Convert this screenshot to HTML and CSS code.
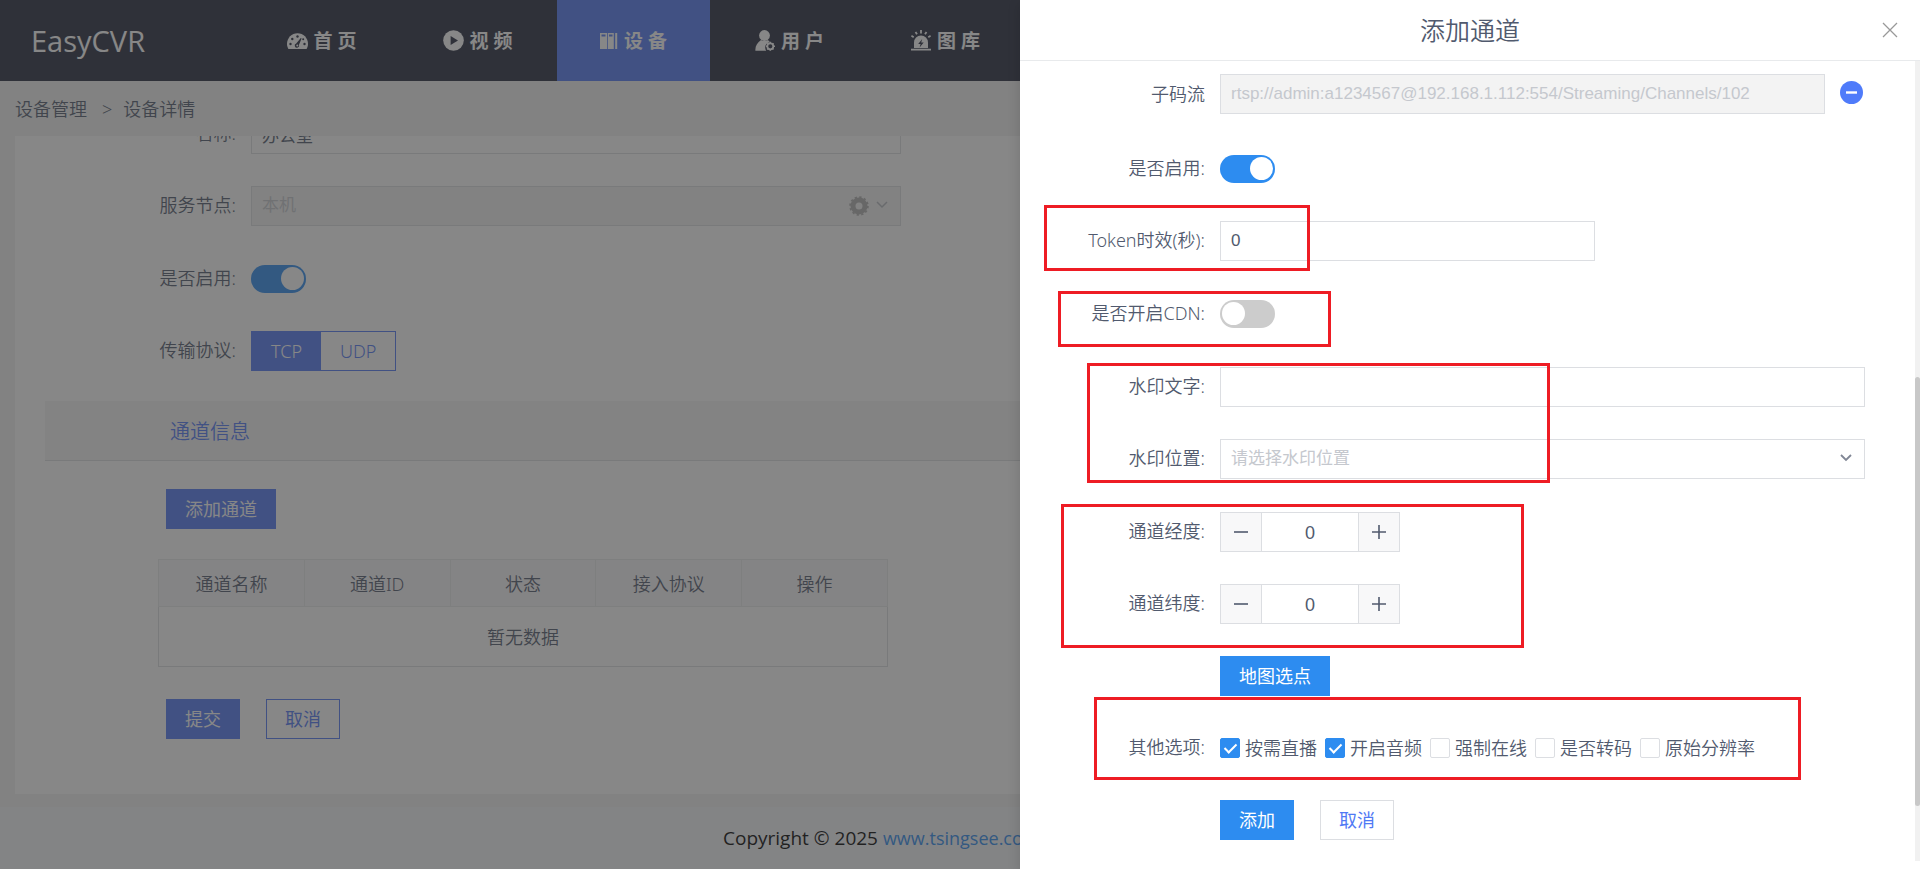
FILE: index.html
```html
<!DOCTYPE html>
<html lang="zh-CN">
<head>
<meta charset="utf-8">
<title>EasyCVR</title>
<link rel="stylesheet" href="styles.css">
</head>
<body>
<div class="page">
  <header class="topbar">
    <div class="brand">EasyCVR</div>
    <nav class="nav">
      <a class="nav-item" href="#">
        <svg width="21" height="16" viewBox="0 0 21 16"><path fill="currentColor" d="M1.4 16C.5 14.500 0 12.700 0 10.800 0 5 4.700.3 10.500.3S21 5 21 10.800c0 1.900-.5 3.700-1.400 5.200z"/><g fill="#252a3e"><circle cx="3.500" cy="11" r="1.200"/><circle cx="5.300" cy="6" r="1.200"/><circle cx="10.500" cy="3.500" r="1.200"/><circle cx="17.500" cy="11" r="1.200"/><circle cx="16.200" cy="6.200" r="1"/><path d="M13.800 5 9.200 10.400a2.200 2.200 0 1 0 2.800 1.300l2.600-6.300z"/></g><circle cx="10.300" cy="12.400" r="1" fill="currentColor"/></svg>
        <span>首 页</span></a>
      <a class="nav-item" href="#">
        <svg width="21" height="21" viewBox="0 0 21 21"><circle cx="10.500" cy="10.500" r="10.300" fill="currentColor"/><path d="M7.600 6v9l7.400-4.500z" fill="#252a3e"/></svg>
        <span>视 频</span></a>
      <a class="nav-item active" href="#">
        <svg width="18" height="18" viewBox="0 0 18 18"><path fill="currentColor" fill-rule="evenodd" d="M0 1h7v16H0zm1.500 1.500v2h4v-2zM7.800 1h6v16h-6zm1.200 1.500v2h3.500v-2zM15.200 1h2v16h-2z"/></svg>
        <span>设 备</span></a>
      <a class="nav-item" href="#">
        <svg width="20" height="21" viewBox="0 0 20 21"><g fill="currentColor"><circle cx="9.500" cy="5.500" r="5.400"/><path d="M6 10c1 1 6 1 7 0l2 2.200c-3 .4-4.800 2.400-4.800 5 0 1.400.3 2.500 1 3.500H.4C0 16 2.400 12.500 6 10z"/></g><circle cx="15.300" cy="16.300" r="3" fill="none" stroke="currentColor" stroke-width="1.800"/><path stroke="currentColor" stroke-width="1.600" d="M15.300 11.800v1.500M15.300 19.300v1.500M11 16.300h1M18.600 16.300H20M12.200 13.200l1 1M17.500 18.500l1 1M18.500 13.200l-1 1M13.200 18.500l-1 1"/></svg>
        <span>用 户</span></a>
      <a class="nav-item" href="#">
        <svg width="20" height="21" viewBox="0 0 20 21"><path fill="currentColor" fill-rule="evenodd" d="M3 18v-5.500a7 7 0 0 1 14 0V18zm8.200-9-4 5h2.400l-1 3.600 4.100-5h-2.500z"/><path stroke="currentColor" stroke-width="1.800" d="M0 19.600h20M10 0v3.500M4.500 2l1.500 2.300M15.500 2 14 4.300M.4 5.800l2.300 1.400M19.600 5.800l-2.300 1.400"/></svg>
        <span>图 库</span></a>
    </nav>
  </header>

  <div class="crumbs"><a href="#">设备管理</a><span class="sep">&gt;</span><a href="#">设备详情</a></div>

  <main class="card">
    <form class="device-form">
      <div class="row">
        <label class="label" for="name"><span class="req">*</span> 名称:</label>
        <input class="field" id="name" type="text" value="办公室">
      </div>
      <div class="row">
        <label class="label" for="node">服务节点:</label>
        <div class="select-wrap">
          <select class="field" id="node" disabled><option>本机</option></select>
          <svg class="gear" width="20" height="20" viewBox="0 0 20 20"><circle cx="10" cy="10" r="6" fill="none" stroke="currentColor" stroke-width="5"/><circle cx="10" cy="10" r="8.900" fill="none" stroke="currentColor" stroke-width="1.800" stroke-dasharray="2.330 2.330"/></svg>
          <svg class="chevron" width="12" height="8" viewBox="0 0 12 8"><path d="M1 1l5 5 5-5" fill="none" stroke="currentColor" stroke-width="1.500"/></svg>
        </div>
      </div>
      <div class="row row-tall">
        <label class="label" for="enable">是否启用:</label>
        <input class="switch" id="enable" type="checkbox" role="switch" checked>
      </div>
      <div class="row">
        <span class="label">传输协议:</span>
        <div class="segmented"><button type="button" class="seg seg-on">TCP</button><button type="button" class="seg">UDP</button></div>
      </div>
      <h2 class="section">通道信息</h2>
      <button type="button" class="btn btn-indigo add">添加通道</button>
      <table class="table">
        <thead><tr><th>通道名称</th><th>通道ID</th><th>状态</th><th>接入协议</th><th>操作</th></tr></thead>
        <tbody><tr><td colspan="5">暂无数据</td></tr></tbody>
      </table>
      <div class="actions">
        <button type="button" class="btn btn-indigo">提交</button>
        <button type="button" class="btn btn-outline">取消</button>
      </div>
    </form>
  </main>

  <footer class="footer"><p>Copyright © 2025 <a href="#">www.tsingsee.com</a></p></footer>
</div>

<div class="mask"></div>

<aside class="drawer">
  <header class="drawer-head">
    <h1>添加通道</h1>
    <button type="button" class="close" aria-label="关闭"><svg width="16" height="16" viewBox="0 0 16 16"><path d="M1 1l14 14M15 1L1 15" stroke="currentColor" stroke-width="1.300"/></svg></button>
  </header>
  <form class="drawer-body">
    <div class="row row-first">
      <label class="label" for="sub">子码流</label>
      <input class="field" id="sub" type="text" disabled value="rtsp://admin:a1234567@192.168.1.112:554/Streaming/Channels/102">
      <button type="button" class="minus" aria-label="移除"><svg width="23" height="23" viewBox="0 0 23 23"><circle cx="11.500" cy="11.500" r="11.500" fill="#4f7bfa"/><path d="M6 11.500h11" stroke="#fff" stroke-width="2.400"/></svg></button>
    </div>
    <div class="row row-tall">
      <label class="label" for="on">是否启用:</label>
      <input class="switch" id="on" type="checkbox" role="switch" checked>
    </div>
    <div class="row">
      <label class="label" for="token">Token时效(秒):</label>
      <input class="field token" id="token" type="text" value="0">
    </div>
    <div class="row row-tall">
      <label class="label" for="cdn">是否开启CDN:</label>
      <input class="switch" id="cdn" type="checkbox" role="switch">
    </div>
    <div class="row row-tall">
      <label class="label" for="wm">水印文字:</label>
      <input class="field" id="wm" type="text">
    </div>
    <div class="row">
      <label class="label" for="wmpos">水印位置:</label>
      <div class="select-wrap">
        <select class="field placeholder" id="wmpos"><option>请选择水印位置</option></select>
        <svg class="chevron" width="12" height="8" viewBox="0 0 12 8"><path d="M1 1l5 5 5-5" fill="none" stroke="currentColor" stroke-width="1.800"/></svg>
      </div>
    </div>
    <div class="row row-tall">
      <label class="label" for="lng">通道经度:</label>
      <div class="stepper"><button type="button" aria-label="减少"><svg width="14" height="14" viewBox="0 0 14 14"><path d="M0 7h14" stroke="currentColor" stroke-width="1.600"/></svg></button><input id="lng" type="text" value="0"><button type="button" aria-label="增加"><svg width="14" height="14" viewBox="0 0 14 14"><path d="M0 7h14M7 0v14" stroke="currentColor" stroke-width="1.600"/></svg></button></div>
    </div>
    <div class="row">
      <label class="label" for="lat">通道纬度:</label>
      <div class="stepper"><button type="button" aria-label="减少"><svg width="14" height="14" viewBox="0 0 14 14"><path d="M0 7h14" stroke="currentColor" stroke-width="1.600"/></svg></button><input id="lat" type="text" value="0"><button type="button" aria-label="增加"><svg width="14" height="14" viewBox="0 0 14 14"><path d="M0 7h14M7 0v14" stroke="currentColor" stroke-width="1.600"/></svg></button></div>
    </div>
    <div class="row">
      <span class="label"></span>
      <button type="button" class="btn btn-blue">地图选点</button>
    </div>
    <div class="row">
      <span class="label">其他选项:</span>
      <div class="checks">
        <label><input type="checkbox" checked>按需直播</label>
        <label><input type="checkbox" checked>开启音频</label>
        <label><input type="checkbox">强制在线</label>
        <label><input type="checkbox">是否转码</label>
        <label><input type="checkbox">原始分辨率</label>
      </div>
    </div>
    <div class="row">
      <span class="label"></span>
      <div class="actions">
        <button type="button" class="btn btn-blue">添加</button>
        <button type="button" class="btn btn-plain">取消</button>
      </div>
    </div>
  </form>
  <div class="scrollbar"><div class="thumb"></div></div>
  <div class="mark mark-token"></div>
  <div class="mark mark-cdn"></div>
  <div class="mark mark-watermark"></div>
  <div class="mark mark-position"></div>
  <div class="mark mark-options"></div>
</aside>
</body>
</html>
```
FILE: styles.css
```css
* { box-sizing: border-box; }

:root {
  --indigo: #5079f5;
  --blue: #2d8cf0;
  --text: #515a6e;
  --line: #dcdee2;
  --nav: #252a3e;
}

html, body { height: 100%; }

body {
  margin: 0;
  overflow: hidden;
  position: relative;
  background: #f2f2f2;
  color: var(--text);
  font: 350 18px/24px "Noto Sans", "Noto Sans CJK SC", sans-serif;
}

a { color: inherit; text-decoration: none; }
svg { display: block; flex: none; }
input, select, button { font: inherit; color: inherit; margin: 0; border-radius: 0; }
button { cursor: pointer; }

.page { display: flex; flex-direction: column; min-height: 100%; }

/* top bar */
.topbar { display: flex; align-items: center; height: 81px; background: var(--nav); color: #fff; }
.brand { width: 245px; padding-left: 31px; font-family: "Open Sans", sans-serif; font-size: 29px; font-weight: 400; line-height: 40px; }
.nav { display: flex; gap: 3px; height: 100%; }
.nav-item { display: flex; align-items: center; justify-content: center; gap: 6px; width: 153px; font-size: 19px; font-weight: 700; }
.nav-item.active { background: var(--indigo); }

.crumbs { display: flex; align-items: center; height: 55px; padding: 0 15px; }
.sep { margin: 0 11px 0 15px; }

/* device card */
.card { flex: 1; margin: 0 15px 13px; padding: 0 30px; background: #fff; overflow: hidden; }
.device-form { margin-top: -22px; }
.row { display: flex; align-items: center; min-height: 40px; margin-bottom: 32px; }
.row-tall { min-height: 41px; }
.device-form .row { width: 856px; }
.label { flex: none; padding-bottom: 2px; text-align: right; white-space: nowrap; }
.device-form .label { width: 191px; margin-right: 15px; }
.req { color: #ed4014; }

.field {
  flex: 1;
  width: 100%;
  min-width: 0;
  height: 40px;
  padding: 0 10px;
  border: 1px solid var(--line);
  background: #fff;
  color: #515a6e;
  font-family: "Liberation Sans", "Noto Sans CJK SC", sans-serif;
  font-size: 17px;
  font-weight: 400;
  appearance: none;
}
.field:disabled { background: #f3f3f3; color: #c5c8ce; opacity: 1; }
.select-wrap { position: relative; flex: 1; display: flex; }
.chevron { position: absolute; right: 13px; top: 15px; color: #808695; }
.device-form .chevron { color: #b5b8be; }
.gear { position: absolute; right: 32px; top: 10px; color: #b0b0b0; }

.switch {
  appearance: none;
  display: flex;
  align-items: center;
  width: 55px;
  height: 28px;
  padding: 0 2px;
  border-radius: 14px;
  background: #ccc;
}
.switch::before { content: ""; width: 23px; height: 23px; border-radius: 50%; background: #fff; }
.switch:checked { background: var(--blue); justify-content: flex-end; }

.segmented { display: flex; height: 40px; border: 1px solid var(--indigo); }
.seg { padding: 0 19px; border: 0; background: #fff; color: var(--indigo); }
.seg-on { background: var(--indigo); color: #fff; }

.section { margin: -2px 0 28px; padding: 0 125px; height: 60px; border-bottom: 1px solid var(--line); background: #f5f5f5; color: var(--indigo); font-size: 20px; font-weight: 350; line-height: 62px; }

.btn { height: 40px; padding: 0 18px; border: 1px solid transparent; font-weight: 400; }
.btn-indigo { background: var(--indigo); color: #fff; }
.btn-outline { background: #fff; color: var(--indigo); border-color: var(--indigo); }
.btn-blue { background: var(--blue); color: #fff; }
.btn-plain { background: #fff; color: var(--indigo); border-color: var(--line); }
.add { margin-left: 121px; }

.table { width: 730px; margin: 30px 0 32px 113px; border-collapse: collapse; table-layout: fixed; border: 1px solid var(--line); }
.table th { height: 47px; padding: 2px 0 0; border: 1px solid #e8eaec; background: #f8f8f9; font-weight: 350; }
.table td { height: 60px; padding: 0; text-align: center; }

.actions { display: flex; gap: 26px; }
.device-form .actions { margin: 0 0 55px 121px; }

.footer { height: 62px; background: #f5f7fb; }
.footer p { width: 474px; margin: 0 auto; color: #000; font-family: "Open Sans", sans-serif; font-size: 19px; line-height: 62px; white-space: nowrap; font-weight: 400; }
.footer a { color: var(--blue); font-size: 18px; }

.mask { position: absolute; inset: 0; background: rgba(55, 55, 55, .6); }

/* drawer */
.drawer { position: absolute; top: 0; right: 0; bottom: 0; width: 900px; background: #fff; box-shadow: 0 4px 12px rgba(0, 0, 0, .15); }
.drawer-head { display: flex; align-items: center; height: 61px; padding: 0 22px 0 38px; border-bottom: 1px solid #e8eaec; }
.drawer-head h1 { flex: 1; margin: 0; text-align: center; font-size: 25px; font-weight: 350; line-height: 36px; }
.close, .minus { padding: 0; border: 0; background: none; color: #999; }
.drawer-body { padding: 13px 55px 0 0; }
.drawer .label { width: 185px; margin-right: 15px; }
.row-first { min-height: 42px; align-items: flex-start; }
.row-first .label { line-height: 40px; }
.minus { margin: 7px 2px 0 15px; }
.drawer .token { flex: 0 1 375px; }
.drawer .placeholder { color: #c5c8ce; }

.stepper { display: flex; width: 180px; height: 40px; border: 1px solid var(--line); }
.stepper button { display: flex; align-items: center; justify-content: center; width: 40px; padding: 0; border: 0; background: #f8f8f9; }
.stepper input { flex: 1; min-width: 0; padding: 2px 0 0; border: solid var(--line); border-width: 0 1px; text-align: center; font-family: "Liberation Sans", sans-serif; font-weight: 400; }

.checks { display: flex; gap: 8px; }
.checks label { display: flex; align-items: center; gap: 5px; white-space: nowrap; }
.checks input { appearance: none; display: flex; align-items: center; justify-content: center; width: 20px; height: 20px; border: 1px solid var(--line); border-radius: 2px; background: #fff; }
.checks input:checked { border-color: var(--blue); background: var(--blue); }
.checks input:checked::before { content: ""; width: 5px; height: 10px; margin-bottom: 3px; border: solid #fff; border-width: 0 2px 2px 0; transform: rotate(45deg); }

.scrollbar { position: absolute; top: 61px; right: 0; bottom: 8px; width: 5px; background: #f1f1f1; }
.thumb { height: 429px; margin-top: 316px; border-radius: 3px; background: #c8c8c8; }

/* highlight frames */
.mark { position: absolute; border: 3px solid #ee1c24; pointer-events: none; }
.mark-token { left: 24px; top: 205px; width: 266px; height: 66px; }
.mark-cdn { left: 38px; top: 291px; width: 273px; height: 56px; }
.mark-watermark { left: 67px; top: 363px; width: 463px; height: 120px; }
.mark-position { left: 41px; top: 504px; width: 463px; height: 144px; }
.mark-options { left: 74px; top: 697px; width: 707px; height: 83px; }
```
